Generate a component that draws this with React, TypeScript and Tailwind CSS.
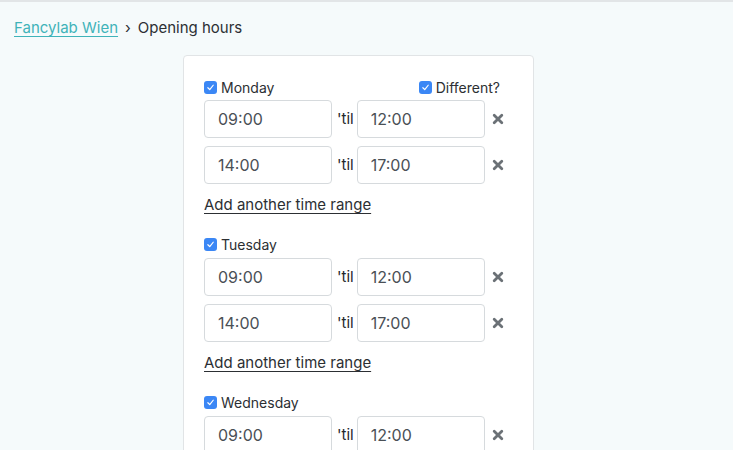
import React from "react";

function Check({ className = "" }: { className?: string }) {
  return (
    <span className={"inline-flex h-[13px] w-[13px] shrink-0 items-center justify-center rounded-[3px] bg-[#3b87f5] " + className}>
      <svg viewBox="0 0 12 12" className="h-[9px] w-[9px]" fill="none" stroke="white" strokeWidth="1.6" strokeLinecap="round" strokeLinejoin="round">
        <path d="M2.5 6.3 L5 8.8 L9.6 3" />
      </svg>
    </span>
  );
}

function XIcon() {
  return (
    <svg viewBox="0 0 12 12" className="h-[12px] w-[12px]" fill="none" stroke="#6b7176" strokeWidth="2.8" strokeLinecap="round">
      <path d="M2.2 2.2 L9.8 9.8 M9.8 2.2 L2.2 9.8" />
    </svg>
  );
}

function TimeInput({ value }: { value: string }) {
  return (
    <div className="flex h-[38px] w-[128px] items-center rounded-[4px] border border-[#d6dadd] bg-white pl-[13px] text-[16px] text-[#4a5056]">
      {value}
    </div>
  );
}

function Row({ from, to }: { from: string; to: string }) {
  return (
    <div className="flex items-center">
      <TimeInput value={from} />
      <span className="ml-[5px] mr-[3px] text-[15px] text-[#25282b]">'til</span>
      <TimeInput value={to} />
      <span className="ml-[7px] flex items-center">
        <XIcon />
      </span>
    </div>
  );
}

function Day({ name, different, first }: { name: string; different?: boolean; first?: boolean }) {
  return (
    <div className="flex flex-col">
      <div className="flex h-[16px] items-center justify-between pr-[13px] text-[14px] text-[#2c2f33]">
        <label className="flex items-center gap-[4px]">
          <Check />
          <span>{name}</span>
        </label>
        {different && (
          <label className="flex items-center gap-[4px]">
            <Check />
            <span>Different?</span>
          </label>
        )}
      </div>
      <div className={(first ? "mt-[5px]" : "mt-[6px]") + " flex flex-col gap-[8px]"}>
        <Row from="09:00" to="12:00" />
        <Row from="14:00" to="17:00" />
      </div>
      <div className="mt-[12px] h-[18px] text-[15px] leading-[18px] text-[#2c2f33]">
        <a className="underline decoration-[1px] underline-offset-[3px]">Add another time range</a>
      </div>
    </div>
  );
}

export default function App() {
  return (
    <div
      className="h-[450px] w-[733px] overflow-hidden border-t-2 border-[#e2e5e7] bg-[#f5fafb]"
      style={{ fontFamily: "Inter, 'Noto Sans', sans-serif" }}
    >
      <div className="flex items-center gap-[7px] pl-[14px] pt-[16px] text-[15px] leading-[20px]">
        <a className="text-[#3fb3b9] underline decoration-[1px] underline-offset-[3px]">Fancylab Wien</a>
        <span className="text-[#2c2f33]">›</span>
        <span className="text-[#2c2f33]">Opening hours</span>
      </div>
      <div className="ml-[183px] mt-[17px] w-[351px] rounded-[4px] border border-[#e1e4e6] bg-white px-[20px] pt-[23px]">
        <div className="flex flex-col gap-[22px]">
          <Day name="Monday" different first />
          <Day name="Tuesday" />
          <Day name="Wednesday" />
        </div>
      </div>
    </div>
  );
}
